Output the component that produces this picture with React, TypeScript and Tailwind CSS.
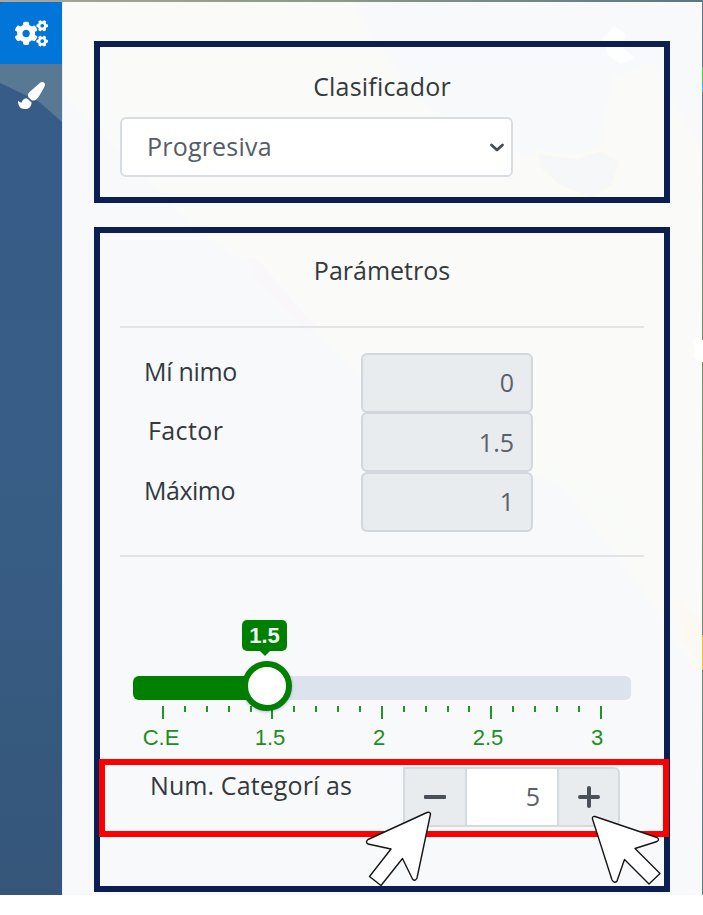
import React from "react";
import { FaCogs, FaPaintBrush } from "react-icons/fa";

const fields = [
  { label: "Mí nimo", value: "0", indent: "pl-6", track: "tracking-[-0.3px]" },
  { label: "Factor", value: "1.5", indent: "pl-7", track: "tracking-[0.4px]" },
  { label: "Máximo", value: "1", indent: "pl-6", track: "tracking-[-0.5px]" },
];

const scale = ["C.E", "1.5", "2", "2.5", "3"];
const ticks = Array.from({ length: 21 }, (_, i) => i);

function MapTint() {
  return (
    <svg className="absolute inset-0 h-full w-full" viewBox="0 0 640 893" preserveAspectRatio="none">
      <path d="M0 90L130 225 205 275 290 370 390 440 500 485 582 590 640 680V893H0Z" fill="#f7f9fa" />
      <path d="M290 0H640V150L590 60 550 75 535 160 440 150 350 95Z" fill="#f7f9fa" />
      <path d="M474 150l40 5 25-8 20 12-8 25-20 14-35-14-18-16z" fill="#f5f7f8" stroke="#fcfaf5" strokeWidth="4" />
      <path d="M540 36l12-12 12 8-3 14 12 10-14 6-14-10z" fill="#fdfefe" />
      <path d="M184 255l12 4 58 66-10 4-52-52z" fill="#faf7fb" />
      <path d="M470 465q90 36 112 95v-20q-30-55-112-80z" fill="#f8fbf7" />
      <path d="M617 595l23 25v46l-20-28z" fill="#fcf8f4" />
    </svg>
  );
}

export default function App() {
  return (
    <div className="relative h-[915px] w-[703px] overflow-hidden bg-white font-['Open_Sans','Noto_Sans',sans-serif] text-[25px] text-[#35393d]">
      <div className="h-[2px] bg-linear-to-r from-[#a6a89a] via-[#8c9688] to-[#5e7681]" />
      <div className="flex h-[893px]">
        <nav className="relative flex w-[62px] shrink-0 flex-col bg-linear-to-b from-[#365b87] via-[#385e87] to-[#355679] text-white">
          <svg className="absolute top-[62px] left-0" width="62" height="60">
            <path d="M0 0H62V58L38 37 0 19Z" fill="#587894" />
          </svg>
          <button className="relative flex h-[62px] items-center justify-center rounded-tl bg-[#0275d8]">
            <FaCogs className="h-[27px] w-[33px]" />
          </button>
          <button className="relative flex h-[62px] items-center justify-center">
            <FaPaintBrush className="h-[27px] w-[27px]" />
          </button>
        </nav>
        <main className="relative w-[640px] shrink-0 overflow-hidden rounded-tr border-l border-[#e9eef2] bg-[#fafaf9]">
          <MapTint />
          <div className="relative flex flex-col gap-6 pt-[39px] pl-[31px]">
            <section className="h-[162px] w-[576px] border-6 border-[#0b1f52] px-5 pt-[21px]">
              <h2 className="h-[49px] text-center leading-[36px]"><span className="tracking-[0.2px]">Clasificador</span></h2>
              <div className="flex h-[60px] w-[393px] items-center justify-between rounded-md border-2 border-[#d8dde4] bg-white pr-[6px] pl-[25px] text-[#555d65]">
                <span className="tracking-[0.2px]">Progresiva</span>
                <svg width="16" height="11" viewBox="0 0 16 11" fill="none" stroke="#444c54" strokeWidth="2.8" strokeLinecap="round" strokeLinejoin="round">
                  <path d="M2.500 3L8 8l5.500-5" />
                </svg>
              </div>
            </section>

            <section className="h-[665px] w-[576px] border-6 border-[#0b1f52] px-5 pt-[19px]">
              <h2 className="h-[74px] text-center leading-[36px]"><span>Parámetros</span></h2>
              <div className="h-[231px] border-y-2 border-[#e2e4e6] pt-[25px]">
                {fields.map((f) => (
                  <div key={f.label} className="flex h-[59.300px]">
                    <label className={`w-[241px] leading-[36px] ${f.indent} ${f.track}`}>{f.label}</label>
                    <div className="flex h-[60px] w-[172px] items-center justify-end rounded-md border-2 border-[#d2d7de] bg-[#e8ecef] pr-[17px] text-[#5b6168]">{f.value}</div>
                  </div>
                ))}
              </div>

              <div className="ml-[13px] w-[498px] pt-[63px] font-['Liberation_Sans',Arial,sans-serif]">
                <div className="ml-[109px] flex h-[36px] w-[45px] flex-col items-center">
                  <div className="flex h-[31px] w-full items-center justify-center rounded-[5px] bg-[#008000] text-[22px] font-bold text-[#f3f8f3]">1.5</div>
                  <div className="border-x-5 border-t-5 border-x-transparent border-t-[#008000]" />
                </div>
                <div className="relative mt-5 h-6 rounded-md bg-[#dde3ec]">
                  <div className="h-6 w-[134px] rounded-l-md bg-[#008000]" />
                  <div className="absolute -top-[15px] left-[109px] z-10 h-[50px] w-[50px] rounded-full border-6 border-[#008000] bg-white shadow-[0_1px_3px_rgba(40,20,200,0.3)]" />
                </div>
                <div className="mt-1.5 ml-[29px] flex h-[13px] w-[440px] justify-between">
                  {ticks.map((i) => (
                    <span key={i} className={i % 5 === 0 ? "h-[13px] w-[2px] bg-[#269326]" : "h-[6px] w-[2px] bg-[#269326]"} />
                  ))}
                </div>
                <div className="-ml-[26px] flex w-[544px] justify-between pt-[5px] text-center text-[22px] leading-[28px] text-[#1c8f1c]">
                  {scale.map((s) => (
                    <span key={s} className="w-[108px]">{s}</span>
                  ))}
                </div>
              </div>

              <div className="mt-[15px] flex h-[60px] pl-[30px]">
                <label className="w-[253px] leading-[36px] tracking-[0.1px] whitespace-nowrap">Num. Categorí as</label>
                <div className="flex h-[60px] w-[217px] overflow-hidden rounded-r-md border-2 border-[#d5dae1] bg-[#e8ecef]">
                  <button className="flex w-[60px] items-center justify-center">
                    <span className="h-[4px] w-[22px] rounded-[1px] bg-[#495057]" />
                  </button>
                  <div className="flex w-[94px] items-center justify-end border-x-2 border-[#d5dae1] bg-white pr-[17px] text-[#5b6168]">5</div>
                  <button className="flex flex-1 items-center justify-center">
                    <svg width="22" height="22" viewBox="0 0 22 22" stroke="#495057" strokeWidth="4" strokeLinecap="round"><path d="M11 2V20M2 11H20" /></svg>
                  </button>
                </div>
              </div>
            </section>
          </div>
        </main>
        <div className="w-px bg-linear-to-b from-[#5e7681] via-[#7f8a68] to-[#5b7c83]" />
      </div>

      <div className="absolute top-[759px] left-[99px] h-[78px] w-[570px] border-6 border-[#ff0000]" />
      <svg className="absolute inset-0" width="703" height="915" fill="white" stroke="#161616" strokeWidth="1.4" strokeLinejoin="round">
        <path d="M427 812.500L368 839.500Q365 842 368 844L391 849 369.500 876.500 381 885.500 402.500 858.500 412.500 879Q415 882 417 878L430.500 814Q430 811.500 427 812.500Z" />
        <path d="M595 816.500L657 837.500Q660 839.500 657 841.500L635 848.500 660 873.500 649 884 624.500 859.500 617 881Q614.500 884 612 880L592.500 819Q592 816 595 816.500Z" />
      </svg>
      <svg className="absolute top-0 right-0" width="12" height="680">
        <path d="M11 67h1v15h-1z" fill="#55c94b" />
        <path d="M11 82h1v10h-1z" fill="#41aaf5" />
        <path d="M2 342l4-5 6 3v22H6l-4-7 2-5z" fill="white" />
        <path d="M11 635h1v35h-1z" fill="#f1bd35" />
      </svg>
    </div>
  );
}
